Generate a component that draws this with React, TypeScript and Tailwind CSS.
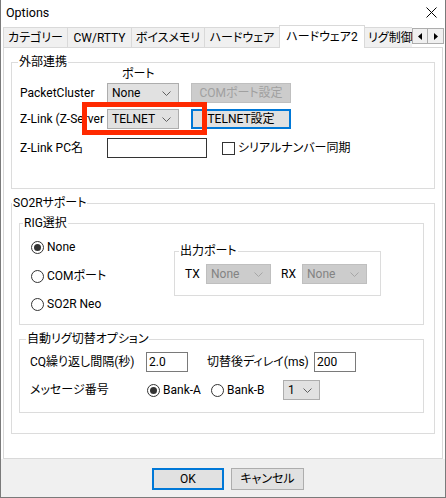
import React from 'react';

const Chevron = ({ color = '#606060' }: { color?: string }) => (
  <svg width="9" height="5" viewBox="0 0 9 5" className="shrink-0">
    <path d="M0.5 0.5 L4.5 4.5 L8.5 0.5" fill="none" stroke={color} strokeWidth="1" />
  </svg>
);

const Combo = ({ value, width, disabled }: { value: string; width: string; disabled?: boolean }) => (
  <div
    className={`flex h-[20px] shrink-0 items-center justify-between border pl-[4px] pr-[7px] ${width} ${
      disabled ? 'border-[#bfbfbf] bg-[#cccccc] text-[#838383]' : 'border-[#adadad] bg-[#e1e1e1] text-black'
    }`}
  >
    <span className="leading-[16px]">{value}</span>
    <Chevron color={disabled ? '#a6a6a6' : '#606060'} />
  </div>
);

const Radio = ({ checked }: { checked?: boolean }) => (
  <svg width="13" height="13" viewBox="0 0 13 13" className="shrink-0">
    <circle cx="6.5" cy="6.5" r="6" fill="white" stroke="#333333" />
    {checked && <circle cx="6.5" cy="6.5" r="3.5" fill="#333333" />}
  </svg>
);

const Group = ({
  title,
  legendClass,
  className,
  children,
}: {
  title: string;
  legendClass: string;
  className: string;
  children?: React.ReactNode;
}) => (
  <fieldset className={`border border-[#dcdcdc] ${className}`}>
    <legend className={`px-[1px] text-[12px] leading-[14px] ${legendClass}`}>{title}</legend>
    {children}
  </fieldset>
);

const tabs = [
  { label: 'カテゴリー', w: 'w-[64px]' },
  { label: 'CW/RTTY', w: 'w-[64px]' },
  { label: 'ボイスメモリ', w: 'w-[73px]' },
  { label: 'ハードウェア', w: 'w-[75px]' },
];

export default function App() {
  return (
    <div className="relative flex h-[498px] w-[446px] flex-col whitespace-nowrap border-x border-b border-[#7a7a7a] bg-white font-['Roboto','Noto_Sans_CJK_JP',sans-serif] text-[12px] text-black [font-feature-settings:'palt']">
      {/* title bar */}
      <div className="flex h-[25px] shrink-0 items-center justify-between pl-[5px] pr-[8px]">
        <span className="text-[12.5px] leading-[16px]">Options</span>
        <svg width="11" height="11" viewBox="0 0 11 11">
          <path d="M0.5 0.5 L10.5 10.5 M10.5 0.5 L0.5 10.5" stroke="#000" strokeWidth="1" />
        </svg>
      </div>

      {/* tab strip */}
      <div className="flex h-[22px] shrink-0 items-end pl-[2px]">
        {tabs.map((t) => (
          <div
            key={t.label}
            className={`flex h-[20px] items-center justify-center border-l border-t border-[#d9d9d9] bg-[#f0f0f0] leading-[16px] ${t.w}`}
          >
            {t.label}
          </div>
        ))}
        <div className="relative z-10 -mb-px flex h-[23px] w-[86px] items-center justify-center border-x border-t border-[#d9d9d9] bg-white pb-[1px] leading-[16px]">
          ハードウェア2
        </div>
        <div className="flex h-[20px] w-[47px] items-center overflow-hidden border-t border-[#d9d9d9] bg-[#f0f0f0] pl-[3px] leading-[16px]">
          リグ制御
        </div>
        <div className="flex self-start pt-[3px]">
          <div className="flex h-[16px] w-[16px] items-center justify-center border border-[#adadad] bg-[#f0f0f0]">
            <svg width="4" height="7" viewBox="0 0 4 7">
              <path d="M4 0 L0 3.5 L4 7 Z" fill="#000" />
            </svg>
          </div>
          <div className="flex h-[16px] w-[16px] items-center justify-center border border-l-0 border-[#adadad] bg-[#f0f0f0]">
            <svg width="4" height="7" viewBox="0 0 4 7">
              <path d="M0 0 L4 3.5 L0 7 Z" fill="#000" />
            </svg>
          </div>
        </div>
      </div>

      {/* tab page */}
      <div className="mx-[2px] h-[412px] w-[440px] shrink-0 border border-[#d9d9d9] bg-white">
        <Group title="外部連携" legendClass="ml-[6px]" className="ml-[7px] mt-[7px] h-[134px] w-[424px]">
          <div className="-mt-[2px] h-[14px] pl-[110px] leading-[14px]">ポート</div>

          <div className="mt-[2px] flex h-[20px] items-center pl-[8px]">
            <span className="w-[87px] leading-[16px]">PacketCluster</span>
            <Combo value="None" width="w-[72px]" />
            <div className="ml-[12px] flex h-[20px] w-[100px] items-center justify-center border border-[#bfbfbf] bg-[#cccccc] leading-[16px] text-[#a0a0a0]">
              COMポート設定
            </div>
          </div>

          <div className="mt-[6px] flex h-[20px] items-center pl-[8px]">
            <span className="w-[87px] overflow-hidden leading-[16px]">Z-Link (Z-Server</span>
            <Combo value="TELNET" width="w-[72px]" />
            <div className="ml-[12px] flex h-[20px] w-[100px] items-center justify-center border-2 border-[#0078d7] bg-[#e1e1e1] leading-[16px]">
              TELNET設定
            </div>
          </div>

          <div className="mt-[9px] flex h-[20px] items-center pl-[8px]">
            <span className="w-[87px] leading-[16px]">Z-Link PC名</span>
            <div className="h-[20px] w-[100px] border border-[#333333] bg-white" />
            <div className="ml-[15px] h-[13px] w-[13px] border border-[#333333] bg-white" />
            <span className="ml-[3px] leading-[16px]">シリアルナンバー同期</span>
          </div>
        </Group>

        <Group title="SO2Rサポート" legendClass="ml-0" className="ml-[7px] mt-[7px] h-[238px] w-[424px]">
          <div className="px-[7px]">
            <Group title="RIG選択" legendClass="ml-[3px]" className="mt-[6px] h-[109px] w-[405px]">
              <div className="flex">
                <div className="flex w-[154px] flex-col pl-[11px] pt-[9px]">
                  <div className="flex h-[16px] items-center gap-[3px] leading-[16px]">
                    <Radio checked />
                    <span>None</span>
                  </div>
                  <div className="mt-[13px] flex h-[16px] items-center gap-[3px] leading-[16px]">
                    <Radio />
                    <span>COMポート</span>
                  </div>
                  <div className="mt-[12px] flex h-[16px] items-center gap-[3px] leading-[16px]">
                    <Radio />
                    <span>SO2R Neo</span>
                  </div>
                </div>
                <Group title="出力ポート" legendClass="ml-[4px]" className="mt-[14px] h-[52px] w-[207px]">
                  <div className="mt-[6px] flex h-[20px] items-center pl-[10px]">
                    <span className="w-[21px] leading-[16px]">TX</span>
                    <Combo value="None" width="w-[65px]" disabled />
                    <span className="ml-[10px] w-[21px] leading-[16px]">RX</span>
                    <Combo value="None" width="w-[65px]" disabled />
                  </div>
                </Group>
              </div>
            </Group>

            <Group title="自動リグ切替オプション" legendClass="ml-[6px]" className="mt-[7px] h-[81px] w-[405px]">
              <div className="mt-[6px] flex h-[20px] items-center pl-[10px]">
                <span className="w-[116px] leading-[16px]">CQ繰り返し間隔(秒)</span>
                <div className="flex h-[20px] w-[42px] items-center border border-[#7a7a7a] bg-white pl-[2px] leading-[16px]">2.0</div>
                <span className="ml-[19px] w-[107px] leading-[16px]">切替後ディレイ(ms)</span>
                <div className="flex h-[20px] w-[42px] items-center border border-[#7a7a7a] bg-white pl-[2px] leading-[16px]">200</div>
              </div>
              <div className="mt-[8px] flex h-[20px] items-center pl-[10px]">
                <span className="w-[117px] leading-[16px]">メッセージ番号</span>
                <div className="flex w-[64px] items-center gap-[3px] leading-[16px]">
                  <Radio checked />
                  <span>Bank-A</span>
                </div>
                <div className="flex w-[72px] items-center gap-[3px] leading-[16px]">
                  <Radio />
                  <span>Bank-B</span>
                </div>
                <Combo value="1" width="w-[37px]" />
              </div>
            </Group>
          </div>
        </Group>
      </div>

      {/* footer */}
      <div className="flex flex-1 gap-[7px] bg-[#f0f0f0] pl-[151px] pt-[9px]">
        <div className="flex h-[22px] w-[72px] items-center justify-center border-2 border-[#0078d7] bg-[#e1e1e1] leading-[16px]">
          OK
        </div>
        <div className="flex h-[22px] w-[73px] items-center justify-center border border-[#adadad] bg-[#e1e1e1] leading-[16px]">
          キャンセル
        </div>
      </div>

      {/* red highlight drawn over the Z-Link combo */}
      <div className="pointer-events-none absolute left-[81px] top-[102px] h-[33px] w-[125px] border-[5px] border-[#ff2a00]" />
    </div>
  );
}
